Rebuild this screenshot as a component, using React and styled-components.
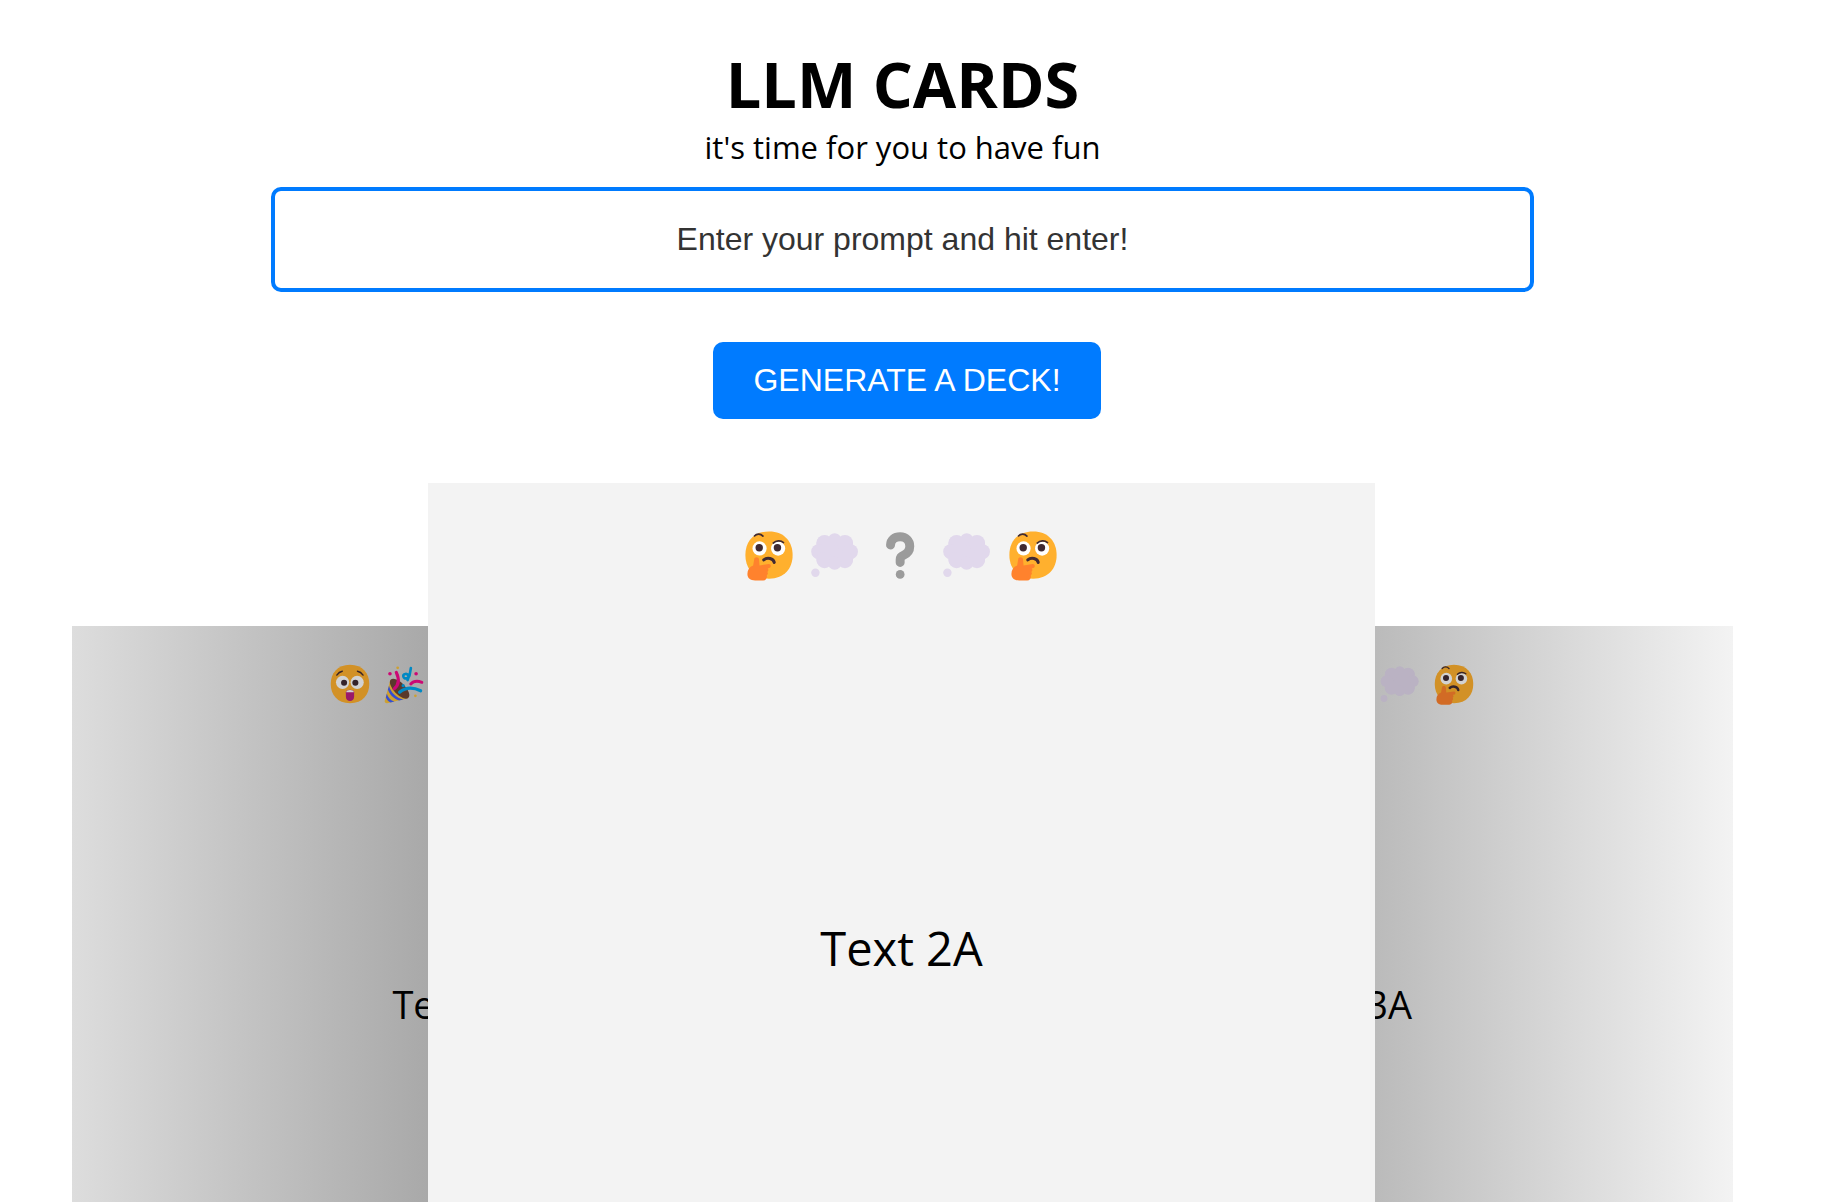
import React from "react";
import styled, { createGlobalStyle, css } from "styled-components";

const GlobalStyle = createGlobalStyle`
  *, *::before, *::after { box-sizing: border-box; }
  body {
    margin: 0;
    background: #fff;
    color: #000;
    font-family: "Open Sans", "Noto Sans", sans-serif;
  }
`;

const Page = styled.main`
  display: flex;
  flex-direction: column;
  align-items: center;
  min-height: 100vh;
  padding: 42px 38px 0 0;
`;

const Title = styled.h1`
  margin: 0;
  font-size: 63px;
  font-weight: 700;
  line-height: 84px;
`;

const Subtitle = styled.p`
  margin: 0;
  font-size: 31px;
  line-height: 42px;
`;

const PromptForm = styled.form`
  display: flex;
  flex-direction: column;
  align-items: center;
  gap: 50px;
  width: 70%;
  margin: 19px 0 64px;
`;

const controlText = css`
  font-family: "Liberation Sans", Arial, sans-serif;
  font-size: 32px;
  line-height: 37px;
  border-radius: 10px;
`;

const PromptInput = styled.input`
  ${controlText}
  width: 100%;
  height: 105px;
  padding: 30px;
  border: 4px solid #007bff;
  background: #fff;
  color: #333;
  text-align: center;
  outline: none;

  &::placeholder {
    color: #333;
    opacity: 1;
  }
`;

const GenerateButton = styled.button`
  ${controlText}
  margin-left: 9px;
  padding: 20px 40px;
  border: 0;
  background: #007bff;
  color: #fff;
  white-space: nowrap;
  cursor: pointer;
`;

const Deck = styled.section`
  flex: 1;
  display: grid;
  grid-template-columns: 356fr 416fr 116fr 415fr 358fr;
  width: 92%;
`;

const slots = {
  left: css`
    grid-column: 1 / 3;
    background: linear-gradient(to right, #dddddd 0%, #c6c6c6 20%, #a8a8a8 47%, #7a7a7a 100%);
  `,
  center: css`
    grid-column: 2 / 5;
    z-index: 1;
    background: #f3f3f3;
  `,
  right: css`
    grid-column: 4 / 6;
    background: linear-gradient(to right, #868686 0%, #bbbbbb 54%, #f3f3f3 100%);
  `,
};

const Card = styled.article`
  ${(p) => slots[p.$slot]}
  grid-row: 1;
  display: flex;
  flex-direction: column;
  align-items: center;
  gap: ${(p) => (p.$slot === "center" ? 336 : 273)}px;
  margin-top: ${(p) => (p.$slot === "center" ? 0 : 143)}px;
  padding-top: ${(p) => (p.$slot === "center" ? 45 : 36)}px;
`;

const EmojiRow = styled.div`
  display: flex;
  gap: ${(p) => (p.$large ? 12 : 10)}px;
  filter: brightness(${(p) => (p.$large ? 1 : 0.825)});

  svg {
    display: block;
    width: ${(p) => (p.$large ? 54 : 44)}px;
    height: ${(p) => (p.$large ? 54 : 44)}px;
  }
`;

const CardText = styled.p`
  margin: 0;
  font-size: ${(p) => (p.$large ? 47 : 38)}px;
  line-height: ${(p) => (p.$large ? 60 : 50)}px;
`;

const FACE =
  "M16 30C25.33 30 30 23.73 30 16S25.33 2 16 2 2 8.27 2 16s4.67 14 14 14Z";

const Thinking = () => (
  <svg viewBox="0 0 32 32" aria-hidden="true" fill="none" strokeLinecap="round">
    <path d={FACE} fill="#FFB02E" />
    <circle cx="10.4" cy="12.1" r="4.2" fill="#fff" />
    <circle cx="21.4" cy="12.2" r="4.2" fill="#fff" />
    <circle cx="10.2" cy="11.7" r="2.2" fill="#402A32" />
    <circle cx="21" cy="11.7" r="2.2" fill="#402A32" />
    <path d="M7.4 4.7C8.7 3.2 11 3.2 12.4 4.8" stroke="#402A32" strokeWidth="1" />
    <path d="M18.5 8.9C20.2 7.3 23 7.2 24.6 8.6" stroke="#402A32" strokeWidth="1" />
    <path d="M12.9 18.9C15 17 18.6 18 19.1 20.4" stroke="#402A32" strokeWidth="1.8" />
    <path
      d="M7.2 18.8C7.2 16.9 10 16.9 10.1 18.8L10.4 22.2L15.8 21.4C17.3 21.3 17.5 23.3 16.1 23.7L15.2 24C15.9 24.6 15.7 25.6 15 26C15.6 26.6 15.4 27.6 14.7 28C15 29.7 14.2 31 12.6 31.1H7.8C5 31.1 3.2 29.8 3.2 27.3C3.2 24.8 4.4 23 6.6 22.2Z"
      fill="#FF822D"
    />
  </svg>
);

const Thought = () => (
  <svg viewBox="0 0 32 32" aria-hidden="true" fill="#E1D8EC">
    <rect x="5" y="6" width="21.6" height="16" rx="3" />
    <circle cx="15.8" cy="6.9" r="3.8" />
    <circle cx="9.8" cy="8.9" r="4.8" />
    <circle cx="21.9" cy="8.9" r="4.8" />
    <circle cx="6.3" cy="14" r="4.4" />
    <circle cx="25.2" cy="14" r="4.4" />
    <circle cx="9.8" cy="19" r="4.8" />
    <circle cx="21.9" cy="19" r="4.8" />
    <circle cx="15.8" cy="20.8" r="4" />
    <circle cx="4.4" cy="26.5" r="2.5" />
  </svg>
);

const Question = () => (
  <svg viewBox="0 0 32 32" aria-hidden="true" fill="none">
    <path
      d="M9.8 10.1C9.9 7 12.2 5.2 15.5 5.2C18.8 5.2 21.2 7.6 21.2 10.8C21.2 13.6 19.5 15.3 17.4 16.2C16 16.8 15.5 17.4 15.5 18.7V20.4"
      stroke="#9B9B9B"
      strokeWidth="5.3"
      strokeLinecap="round"
      strokeLinejoin="round"
    />
    <circle cx="15.5" cy="27.5" r="2.6" fill="#9B9B9B" />
  </svg>
);

const Astonished = () => (
  <svg viewBox="0 0 32 32" aria-hidden="true" fill="none" strokeLinecap="round">
    <path d={FACE} fill="#FFB02E" />
    <circle cx="10.6" cy="14.8" r="4.8" fill="#fff" />
    <circle cx="21.2" cy="14.8" r="4.8" fill="#fff" />
    <circle cx="11.7" cy="15.1" r="2.2" fill="#402A32" />
    <circle cx="19.9" cy="15.1" r="2.2" fill="#402A32" />
    <path d="M6.4 9.5C7.4 8 8.6 7 10.4 6.7M21.4 6.7C23.2 7 24.5 8 25.5 9.5" stroke="#402A32" strokeWidth="1" />
    <path d="M13 22C13 19.6 19 19.6 19 22V25.2C19 29.4 13 29.4 13 25.2Z" fill="#BB1D80" />
    <path d="M13.2 22C13.2 19.7 18.8 19.7 18.8 22Z" fill="#fff" />
  </svg>
);

const Party = () => (
  <svg viewBox="0 0 32 32" aria-hidden="true" fill="none" strokeLinecap="round">
    <path d="M6 13.2L2 28.2C1.8 29.4 2.6 30.2 3.8 30L18.8 26.4Z" fill="#F9C23C" />
    <ellipse cx="12.8" cy="19.4" rx="9.2" ry="4.2" transform="rotate(46 12.8 19.4)" fill="#6D4534" />
    <path d="M5.1 17.2C6.4 22 10.4 26.2 15.6 27.2L12.4 28C8.6 26.8 5.4 23.6 4.3 20Z" fill="#3F5FFF" />
    <path d="M3.5 23C4.4 25.8 6.4 28 9 28.8L6.2 29.5C4.4 28.6 3.3 27.2 2.8 25.6Z" fill="#3F5FFF" />
    <path d="M8.9 19.4C12.2 16.9 12.6 12.4 10.4 7.6" stroke="#F70A8D" strokeWidth="2.3" />
    <path d="M12.8 22C16.8 18.6 22.5 18.2 28.1 20.9" stroke="#00A6ED" strokeWidth="2.3" />
    <path d="M20.9 16C22.8 13.9 26 13.5 29 14.8" stroke="#F70A8D" strokeWidth="2.1" />
    <path d="M21 4.4L20.1 9.4C19.5 12.5 15.8 12.6 15.5 10.5C15.2 8.5 18.4 7.8 19.2 10C19.5 11.2 19.1 12.1 18.6 13.2" stroke="#00A6ED" strokeWidth="1.9" />
    <circle cx="5.8" cy="8.6" r="1.3" fill="#F70A8D" />
    <circle cx="24.8" cy="8.6" r="1.3" fill="#F70A8D" />
    <circle cx="11.4" cy="4.2" r="1" fill="#F9C23C" />
    <circle cx="24.3" cy="24.6" r="1" fill="#F9C23C" />
    <circle cx="15.4" cy="17.2" r="1.2" fill="#00A6ED" />
  </svg>
);

const cards = [
  { slot: "left", text: "Text 1A", emojis: [Astonished, Party, Question, Party, Astonished] },
  { slot: "center", text: "Text 2A", emojis: [Thinking, Thought, Question, Thought, Thinking] },
  { slot: "right", text: "Text 3A", emojis: [Thinking, Thought, Question, Thought, Thinking] },
];

export default function App() {
  return (
    <>
      <GlobalStyle />
      <Page>
        <Title>LLM CARDS</Title>
        <Subtitle>it's time for you to have fun</Subtitle>
        <PromptForm onSubmit={(e) => e.preventDefault()}>
          <PromptInput
            type="text"
            aria-label="Enter your prompt and hit enter!"
            placeholder="Enter your prompt and hit enter!"
          />
          <GenerateButton type="submit">GENERATE A DECK!</GenerateButton>
        </PromptForm>
        <Deck>
          {cards.map(({ slot, text, emojis }) => (
            <Card key={slot} $slot={slot}>
              <EmojiRow $large={slot === "center"}>
                {emojis.map((Emoji, i) => (
                  <Emoji key={i} />
                ))}
              </EmojiRow>
              <CardText $large={slot === "center"}>{text}</CardText>
            </Card>
          ))}
        </Deck>
      </Page>
    </>
  );
}
